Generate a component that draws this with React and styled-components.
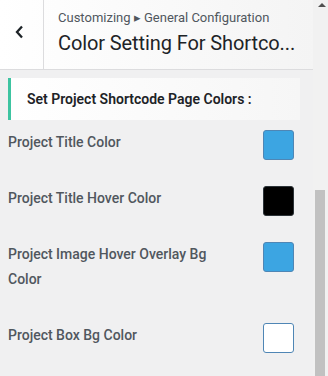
import React from "react";
import styled, { createGlobalStyle } from "styled-components";

const Global = createGlobalStyle`
  html, body { margin: 0; padding: 0; background: #f0f0f1; }
  body { font-family: Roboto, "Liberation Sans", sans-serif; overflow: hidden; }
  * { box-sizing: border-box; }
`;

const Frame = styled.div`
  display: flex;
  width: 328px;
  height: 376px;
  overflow: hidden;
`;

const Panel = styled.div`
  flex: 1;
  min-width: 0;
  display: flex;
  flex-direction: column;
`;

const Header = styled.header`
  display: flex;
  height: 70px;
  background: linear-gradient(to right, #ffffff, #f4f4f4);
  border-bottom: 1px solid #dcdcde;
  flex-shrink: 0;
`;

const BackButton = styled.button`
  width: 44px;
  border: 0;
  border-right: 1px solid #dcdcde;
  background: transparent;
  display: flex;
  align-items: center;
  justify-content: center;
  padding: 0 5px 6px 0;
  color: #1d2327;
`;

const TitleBlock = styled.div`
  flex: 1;
  min-width: 0;
  padding: 10px 0 0 14px;
  display: flex;
  flex-direction: column;
`;

const Crumb = styled.span`
  font-size: 13px;
  line-height: 16px;
  color: #50575e;
  white-space: nowrap;
`;

const Title = styled.h1`
  margin: 4px 0 0;
  font-size: 20px;
  font-weight: 400;
  letter-spacing: -0.1px;
  line-height: 26px;
  color: #1d2327;
  white-space: nowrap;
  overflow: hidden;
`;

const Content = styled.div`
  padding: 8px 19px 0 8px;
  display: flex;
  flex-direction: column;
`;

const SectionHead = styled.div`
  height: 42px;
  margin-right: -6px;
  border-left: 3px solid #3dc4a1;
  background: linear-gradient(to right, #ffffff, #f6f6f6);
  display: flex;
  align-items: center;
  padding-left: 16px;
  font-size: 14px;
  font-weight: 600;
  color: #1d2327;
  margin-bottom: 10px;
`;

const Row = styled.div`
  display: flex;
  justify-content: space-between;
  align-items: flex-start;
  margin-bottom: 25px;
`;

const Label = styled.span`
  width: 210px;
  font-size: 14px;
  font-weight: 500;
  line-height: 25px;
  padding-bottom: 6px;
  color: #50575e;
`;

const Swatch = styled.span`
  width: 31px;
  height: 30px;
  border-radius: 3px;
  border: 1px solid ${(p) => (p.$c === "#000000" ? "#2c3338" : "#4f86b5")};
  background: ${(p) => p.$c};
  flex-shrink: 0;
`;

const ScrollBar = styled.div`
  width: 15px;
  background: #f1f1f1;
  display: flex;
  flex-direction: column;
  align-items: center;
  padding-top: 3px;
`;

const Arrow = styled.span`
  width: 0;
  height: 0;
  border-left: 4px solid transparent;
  border-right: 4px solid transparent;
  border-bottom: 4px solid #505050;
  margin-left: 2px;
`;

const Thumb = styled.div`
  margin-top: 183px;
  width: 10px;
  margin-right: 1px;
  flex: 1;
  background: #c1c1c1;
`;

const rows = [
  { label: "Project Title Color", color: "#3ca5e2" },
  { label: "Project Title Hover Color", color: "#000000" },
  { label: "Project Image Hover Overlay Bg Color", color: "#3ca5e2" },
  { label: "Project Box Bg Color", color: "#ffffff" },
];

export default function App() {
  return (
    <Frame>
      <Global />
      <Panel>
        <Header>
          <BackButton aria-label="Back">
            <svg width="10" height="16" viewBox="0 0 10 16">
              <path d="M8 2.5 L3 8 L8 13.5" fill="none" stroke="#1d2327" strokeWidth="2.3" />
            </svg>
          </BackButton>
          <TitleBlock>
            <Crumb>Customizing ▸ General Configuration</Crumb>
            <Title>Color Setting For Shortco...</Title>
          </TitleBlock>
        </Header>
        <Content>
          <SectionHead>Set Project Shortcode Page Colors :</SectionHead>
          {rows.map((r) => (
            <Row key={r.label}>
              <Label>{r.label}</Label>
              <Swatch $c={r.color} />
            </Row>
          ))}
        </Content>
      </Panel>
      <ScrollBar>
        <Arrow />
        <Thumb />
      </ScrollBar>
    </Frame>
  );
}
